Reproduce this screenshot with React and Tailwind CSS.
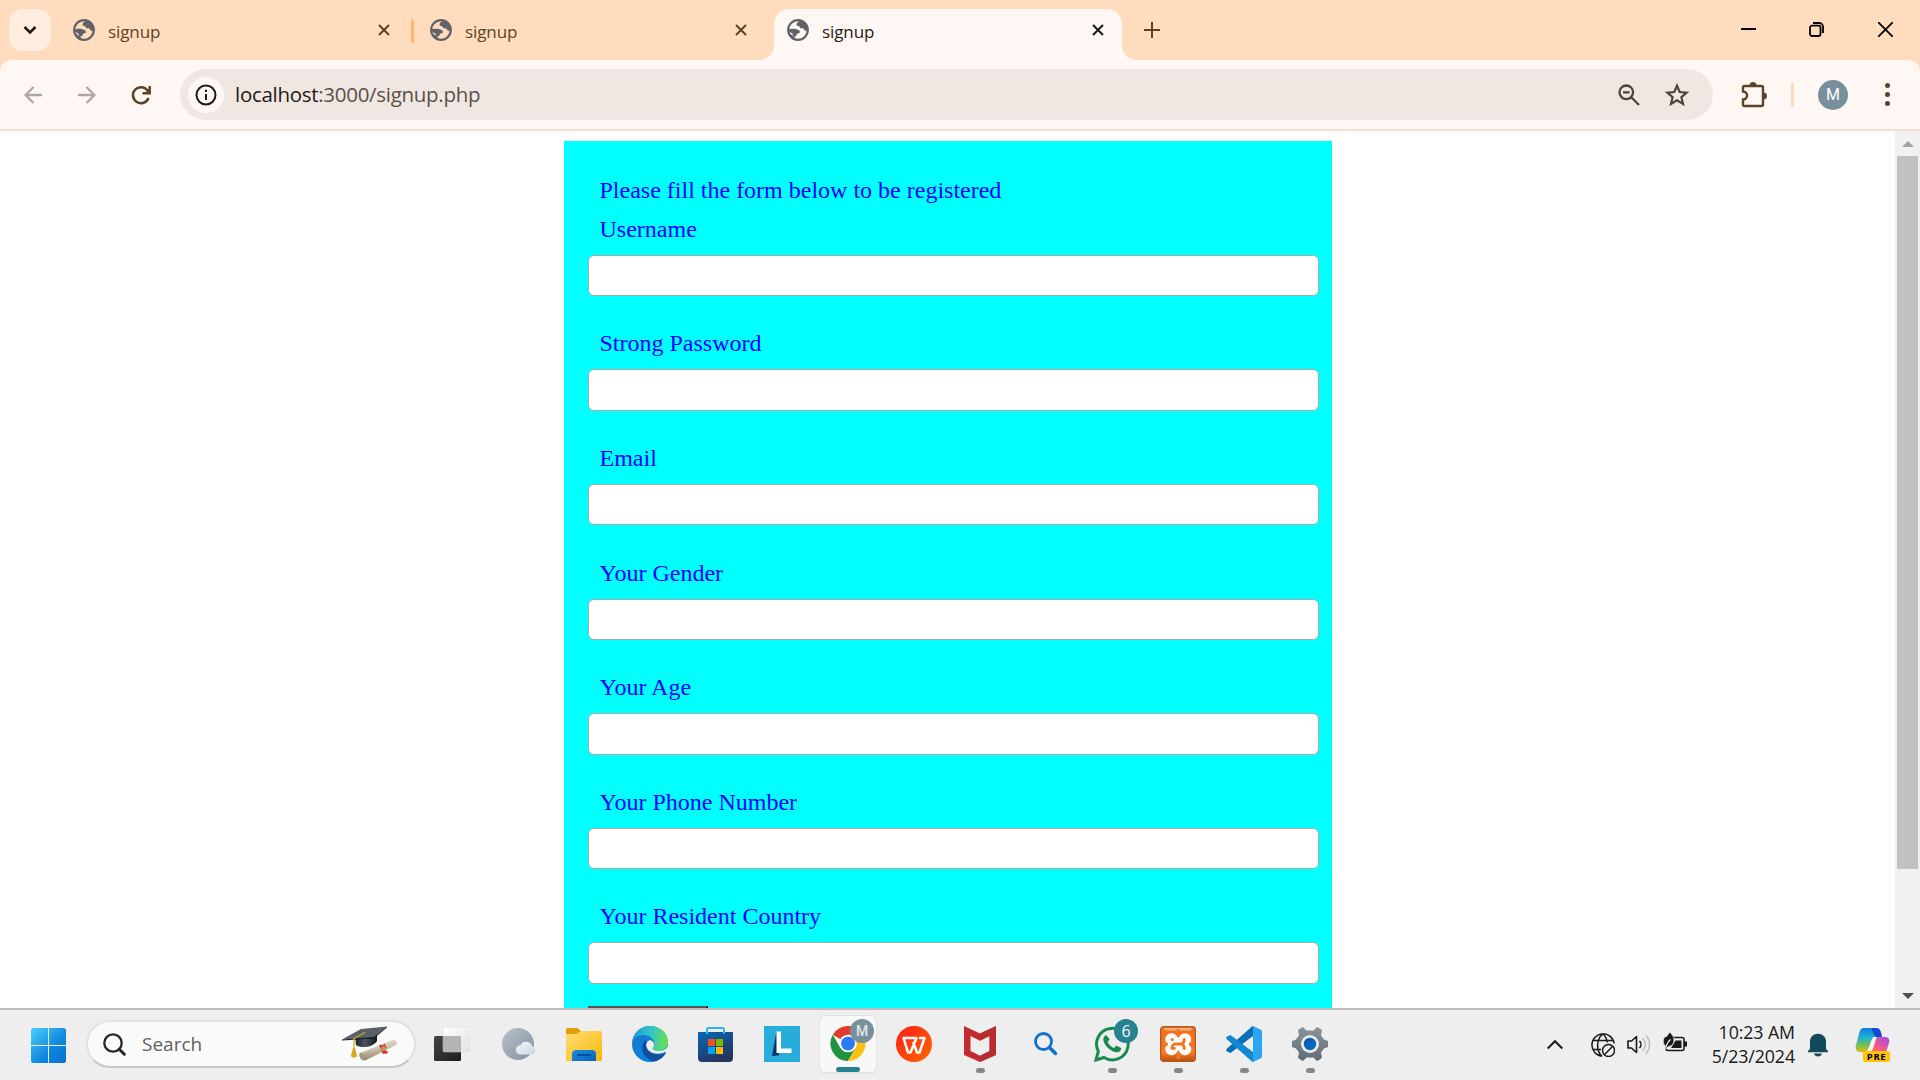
import React from "react";

const UI = "font-['Open_Sans','Noto_Sans',sans-serif]";

function Globe() {
  return (
    <svg className="h-[22px] w-[22px] shrink-0" viewBox="0 0 22 22">
      <circle cx="11" cy="11" r="9.8" fill="none" stroke="#5f6368" strokeWidth="2.200" />
      <path d="M12.500 1.300C12 3 9.500 3.500 9.500 5.500c0 1.500 1.200 1.300 2.200 1.500 1.300.3.800 1.800 2 2.300 1 .4 1.800-.6 2.700.3.800.8.6 2 2 2.200 1 .1 1.800-.2 2.800-.6C21.300 6 17.500 1.500 12.500 1.300z" fill="#5f6368" />
      <path d="M1.300 10.200C4 9.600 7 9.500 9.500 10.200c2 .6 3.800 1.300 3.300 3-.3 1.100-1.700 1.100-2.600 1.600-.9.600-.4 1.700-1 2.300-.8.700-2.200.2-3-.6-.6-.7-.2-1.600-1.200-2.200C3.500 13.500 2 13 1.300 10.200z" fill="#5f6368" />
      <path d="M3 15l4 2 1.800 3.500C6 20 4 18 3 15z" fill="#5f6368" />
    </svg>
  );
}

function Cross({ className }) {
  return (
    <svg className={"h-3 w-3 shrink-0 " + className} viewBox="0 0 12 12" fill="none" stroke="currentColor" strokeWidth="2">
      <path d="M1 1l10 10M11 1L1 11" />
    </svg>
  );
}

function Tab({ active }) {
  return (
    <div className={active ? "relative mt-[9px] flex h-[51px] w-[348px] rounded-t-[15px] bg-[#fff7f4] text-[#1f1a17]" : "mt-[9px] flex h-[51px] w-[348px] text-[#5c4326]"}>
      {active && (
        <>
          <svg className="absolute bottom-0 -left-[15px] h-[15px] w-[15px]" viewBox="0 0 15 15"><path d="M15 0v15H0A15 15 0 0 0 15 0z" fill="#fff7f4" /></svg>
          <svg className="absolute bottom-0 -right-[15px] h-[15px] w-[15px]" viewBox="0 0 15 15"><path d="M0 0v15h15A15 15 0 0 1 0 0z" fill="#fff7f4" /></svg>
        </>
      )}
      <div className="flex h-[42px] w-full items-center pl-[13px] pr-[18px]">
        <Globe />
        <span className="ml-[13px] pt-[3px] text-[17px] leading-[20px] tracking-[-0.1px]">signup</span>
        <Cross className="ml-auto" />
      </div>
    </div>
  );
}

function TabStrip() {
  return (
    <div className="flex h-[60px] items-start bg-[#ffdcbd]">
      <div className="mt-[9px] ml-[9px] flex h-[42px] w-[42px] items-center justify-center rounded-[14px] bg-[#ffeddf]">
        <svg className="h-[12px] w-[14px]" viewBox="0 0 14 12" fill="none" stroke="#1f1a17" strokeWidth="2.600"><path d="M1.500 3L7 8.500 12.500 3" /></svg>
      </div>
      <div className="ml-[9px] flex">
        <Tab />
        <div className="relative z-10 mt-[19px] ml-[3px] h-6 w-[3px] rounded bg-[#ffb868]" />
        <div className="ml-[3px]"><Tab /></div>
        <div className="ml-[9px]"><Tab active /></div>
      </div>
      <svg className="mt-[22px] ml-[22px] h-4 w-4" viewBox="0 0 16 16" stroke="#5c4326" strokeWidth="2"><path d="M8 0v16M0 8h16" /></svg>
      <div className="mt-[22px] mr-[27px] ml-auto flex items-center text-black">
        <svg className="h-[15px] w-[15px]" viewBox="0 0 15 15"><path d="M0 7h15" stroke="currentColor" strokeWidth="2" /></svg>
        <svg className="ml-[53px] h-[15px] w-[15px]" viewBox="0 0 15 15" fill="none" stroke="currentColor" strokeWidth="1.800"><rect x="1" y="3.700" width="10.500" height="10.300" rx="2" /><path d="M4 1h6a4 4 0 0 1 4 4v6" /></svg>
        <svg className="ml-[54px] h-[15px] w-[15px]" viewBox="0 0 15 15" stroke="currentColor" strokeWidth="1.800"><path d="M0 0l15 15M15 0L0 15" /></svg>
      </div>
    </div>
  );
}

function Toolbar() {
  return (
    <div className="bg-[#ffdcbd]">
      <div className="flex h-[71px] items-center rounded-t-[12px] border-b-2 border-[#f0dfd2] bg-[#fff7f4] pr-[30px] pl-[24px]">
        <svg className="h-[18px] w-[18px]" viewBox="0 0 18 18" fill="none" stroke="#aea8a4" strokeWidth="2.300"><path d="M18 9H2M9.500 1L1.600 9l7.900 8" /></svg>
        <svg className="ml-9 h-[18px] w-[18px]" viewBox="0 0 18 18" fill="none" stroke="#aea8a4" strokeWidth="2.300"><path d="M0 9h16M8.500 1l7.900 8-7.900 8" /></svg>
        <svg className="ml-[35px] h-5 w-5" viewBox="0 0 20 20" fill="none" stroke="#5c4326" strokeWidth="2.500"><path d="M17.500 13A8 8 0 1 1 16.500 5.500L18 7.200M18.700 1v7.200h-7.200" /></svg>
        <div className="ml-[29px] flex h-[51px] w-[1533px] items-center rounded-full bg-[#f0e7e2] pr-6 pl-2">
          <div className="flex h-9 w-9 items-center justify-center rounded-full bg-[#fff7f4]">
            <svg className="h-[22px] w-[22px]" viewBox="0 0 22 22" fill="none" stroke="#1f1a17" strokeWidth="2"><circle cx="11" cy="11" r="9.500" /><path d="M11 10v6M11 5.700v2.200" /></svg>
          </div>
          <span className="ml-[11px] pb-[2px] text-[20.500px] leading-[28px] tracking-[-0.290px] text-[#5b4f4a]"><span className="text-[#1f1a17]">localhost</span>:3000/signup.php</span>
          <svg className="ml-auto h-[22px] w-[22px]" viewBox="0 0 22 22" fill="none" stroke="#50443b" strokeWidth="2.300"><circle cx="8.300" cy="8.300" r="6.800" /><path d="M13 13l8 8M5 8.300h6.600" /></svg>
          <svg className="ml-[25px] h-6 w-6" viewBox="0 0 24 24" fill="none" stroke="#50443b" strokeWidth="2.200"><path d="M12 2.700l2.700 6.300 6.900.6-5.200 4.500 1.600 6.800-6-3.600-6 3.600 1.600-6.800L2.400 9.600 9.300 9z" /></svg>
        </div>
        <svg className="ml-[28px] h-[26px] w-[26px]" viewBox="0 0 26 26" fill="none" stroke="#5c4326" strokeWidth="2.400"><path d="M3.500 4h17a1.500 1.500 0 0 1 1.500 1.500v17a1.500 1.500 0 0 1-1.500 1.500h-17A1.500 1.500 0 0 1 2 22.500v-5a4 4 0 0 0 0-8v-4A1.500 1.500 0 0 1 3.500 4z" /><path d="M8.500 3.500a3.500 3.500 0 0 1 7 0zM22.500 10.500a3.500 3.500 0 0 1 0 7z" fill="#5c4326" stroke="none" /></svg>
        <div className="ml-[24px] h-6 w-[3px] bg-[#ffdcb9]" />
        <div className="ml-6 flex h-[30px] w-[30px] items-center justify-center rounded-full bg-[#78909c] font-[Roboto,sans-serif] text-[16px] text-white">M</div>
        <div className="ml-auto flex w-[5px] flex-col gap-1">
          <i className="h-[5px] w-[5px] rounded-full bg-[#5c4326]" />
          <i className="h-[5px] w-[5px] rounded-full bg-[#5c4326]" />
          <i className="h-[5px] w-[5px] rounded-full bg-[#5c4326]" />
        </div>
      </div>
    </div>
  );
}

const FIELDS = ["Username", "Strong Password", "Email", "Your Gender", "Your Age", "Your Phone Number", "Your Resident Country"];

function Page() {
  return (
    <div className="flex h-[877px] overflow-hidden bg-white">
      <div className="flex flex-1 justify-center overflow-hidden pt-[10px]">
        <form className="h-[1100px] w-[768px] shrink-0 bg-[#00ffff] pt-[30px] pl-6 font-['Liberation_Serif',serif] text-[24px] leading-[39px] text-[#0000ff]">
          <p className="h-[38.800px] pl-3">Please fill the form below to be registered</p>
          {FIELDS.map((f) => (
            <div key={f} className="h-[114.600px]">
              <label className="block h-[45px] pl-3">{f}</label>
              <input className="block h-[41.400px] w-[731px] rounded-[6px] border border-[#aaa] bg-white" />
            </div>
          ))}
          <button type="button" className="-mt-[6px] block h-12 w-[120px] border-[3px] border-[#555] border-r-black bg-[#333]" />
        </form>
      </div>
      <div className="flex w-[25px] flex-col items-center bg-[#f1f1f1]">
        <svg className="mt-[10px] h-[6px] w-[12px]" viewBox="0 0 12 6"><path d="M6 0l6 6H0z" fill="#a3a3a3" /></svg>
        <div className="mt-[9px] h-[713px] w-[21px] bg-[#c1c1c1]" />
        <svg className="mt-auto mb-[9px] h-[6px] w-[12px]" viewBox="0 0 12 6"><path d="M0 0h12L6 6z" fill="#505050" /></svg>
      </div>
    </div>
  );
}

function WindowsLogo() {
  return (
    <svg className="h-[35px] w-[35px]" viewBox="0 0 35 35">
      <defs><linearGradient id="win" x1="0" y1="0" x2="35" y2="35" gradientUnits="userSpaceOnUse"><stop stopColor="#4cd0ff" /><stop offset=".6" stopColor="#0f86dc" /><stop offset="1" stopColor="#0472d0" /></linearGradient></defs>
      <path fill="url(#win)" d="M1.500 0H17v17H0V1.500zM18 0h15.500L35 1.500V17H18zM0 18h17v17H1.500L0 33.500zM18 18h17v15.500L33.500 35H18z" />
    </svg>
  );
}

function Graduation() {
  return (
    <svg className="h-[36px] w-[58px]" viewBox="0 0 58 36">
      <defs>
        <linearGradient id="cap" x1="0" y1="0" x2="1" y2="0"><stop stopColor="#20242a" /><stop offset=".45" stopColor="#4d545c" /><stop offset="1" stopColor="#15181c" /></linearGradient>
        <linearGradient id="roll" x1="0" y1="0" x2=".3" y2="1"><stop stopColor="#f3ecdc" /><stop offset=".5" stopColor="#cfc4ac" /><stop offset="1" stopColor="#8c8068" /></linearGradient>
      </defs>
      <path d="M14 10l22-3v8c-3 6-16 8-21 4z" fill="url(#cap)" />
      <path d="M1 13.500L20 3 46 .500 33 11z" fill="#5b6168" />
      <path d="M1 13.500l32-2.500L46 .500v1L33 12.500 1 14.500z" fill="#1d2024" />
      <path d="M24 6.500L13 12.500v12" stroke="#dda520" strokeWidth="1.200" fill="none" />
      <path d="M12 22l2 0 2 8c-1 2-5 2-6 0z" fill="#e0a41c" />
      <path d="M19 27L52 14c3-1 5 3 3 5L25 34c-3 2-8-4-6-7z" fill="url(#roll)" />
      <ellipse cx="21" cy="30.500" rx="2.200" ry="4" transform="rotate(-25 21 30.500)" fill="#a5987c" />
      <path d="M38 19l4 0 4 8-4 1zM40 26l7-1-1 3zM43 17l3 5-4-1z" fill="#e02a35" />
      <circle cx="42.500" cy="22.500" r="2.500" fill="#b59a55" />
    </svg>
  );
}

function TaskView() {
  return (
    <svg className="h-9 w-9" viewBox="0 0 36 36">
      <defs><linearGradient id="tvd" x2="1" y2="1"><stop stopColor="#454545" /><stop offset="1" stopColor="#1c1c1c" /></linearGradient><linearGradient id="tvl" x2="1" y2="1"><stop stopColor="#ffffff" /><stop offset="1" stopColor="#e2e2e2" /></linearGradient></defs>
      <rect x="0" y="10" width="27" height="25" rx="1.500" fill="url(#tvd)" />
      <rect x="9" y="1" width="27" height="25" rx="1.500" fill="url(#tvl)" stroke="#d8d8d8" strokeWidth=".5" />
      <path d="M9 10h18v16H10.500A1.500 1.500 0 0 1 9 24.500z" fill="#b4b4b4" />
    </svg>
  );
}

function Weather() {
  return (
    <svg className="h-9 w-9" viewBox="0 0 36 36">
      <defs><linearGradient id="wea" x1="0" y1="0" x2="1" y2="1"><stop stopColor="#b9c3cf" /><stop offset="1" stopColor="#85909d" /></linearGradient><linearGradient id="clo" x1="0" y1="0" x2="1" y2="1"><stop stopColor="#f6f8fb" /><stop offset="1" stopColor="#ccd5e0" /></linearGradient></defs>
      <circle cx="18" cy="18" r="16" fill="url(#wea)" />
      <path d="M20.500 28.500a4.600 4.600 0 0 1 0-9.300 6.300 6.300 0 0 1 11.600.8 4.400 4.400 0 0 1-.5 8.500z" fill="url(#clo)" />
    </svg>
  );
}

function Folder() {
  return (
    <svg className="h-9 w-9" viewBox="0 0 36 36">
      <defs><linearGradient id="fol" x1="0" y1="0" x2="1" y2="1"><stop stopColor="#ffdf72" /><stop offset="1" stopColor="#fab60d" /></linearGradient><linearGradient id="fob" x1="0" y1="0" x2="1" y2="1"><stop stopColor="#1a8ce0" /><stop offset="1" stopColor="#0a64b8" /></linearGradient></defs>
      <path d="M0 3.500A1.500 1.500 0 0 1 1.500 2h10l4 3.500-5 4H0z" fill="#e09f07" />
      <path d="M0 8h10l5-3h19.500A1.500 1.500 0 0 1 36 6.500v27a1.500 1.500 0 0 1-1.500 1.500h-33A1.500 1.500 0 0 1 0 33.500z" fill="url(#fol)" />
      <path d="M6 35v-7a4 4 0 0 1 4-4h16a4 4 0 0 1 4 4v7z" fill="url(#fob)" />
      <path d="M11 29h14" stroke="#08508f" strokeWidth="1.800" />
    </svg>
  );
}

function Edge() {
  return (
    <svg className="h-9 w-9" viewBox="0 0 36 36">
      <defs>
        <linearGradient id="ed1" x1="0" y1=".3" x2="1" y2=".4"><stop stopColor="#189bd8" /><stop offset=".5" stopColor="#33c3d0" /><stop offset="1" stopColor="#6be14d" /></linearGradient>
        <linearGradient id="ed2" x1="0" y1="0" x2=".4" y2="1"><stop stopColor="#1b75c5" /><stop offset="1" stopColor="#0a82e0" /></linearGradient>
        <linearGradient id="ed3" x1="0" y1="0" x2="1" y2="1"><stop stopColor="#0d4aa0" /><stop offset="1" stopColor="#14539e" /></linearGradient>
      </defs>
      <circle cx="18" cy="18" r="18" fill="url(#ed2)" />
      <path d="M0 17C1 7 8.500 0 18 0c10 0 18 7 18 15.500 0 6-4.500 9.500-9.500 9.500-4 0-6.500-1.500-5.800-3 1.300-1.500 1.600-2.600 1.600-4C22.300 12.500 17.500 9 11.500 9 5 9 1 13 0 17z" fill="url(#ed1)" />
      <path d="M14 14c-7 5-4 19 8 21.500 5-1 9.500-4 12-8.500-10 4-20-1-20-13z" fill="url(#ed3)" />
      <path d="M18 14c-3 1.500-4.500 4-3.500 7 2 6.500 11 8.500 18.500 5 1-.5 1.500 0 1 1l2 0V20c-2 4-6 5-9.500 5-4 0-6.500-1.500-5.800-3 2.500-3 1.500-6.500-2.700-8z" fill="#eee" />
    </svg>
  );
}

function Store() {
  return (
    <svg className="h-9 w-9" viewBox="0 0 36 36">
      <defs><linearGradient id="sto" x1="0" y1="0" x2=".5" y2="1"><stop stopColor="#0768b8" /><stop offset="1" stopColor="#24365f" /></linearGradient></defs>
      <path d="M0 6h35v26a4 4 0 0 1-4 4H4a4 4 0 0 1-4-4z" fill="url(#sto)" />
      <path d="M9 8V3.500A1.500 1.500 0 0 1 10.500 2h14A1.500 1.500 0 0 1 26 3.500V8" fill="none" stroke="#2bb5ee" strokeWidth="2" />
      <path d="M10 13h7v7h-7z" fill="#f25022" /><path d="M18 13h7v7h-7z" fill="#7fba00" /><path d="M10 21h7v7h-7z" fill="#00a4ef" /><path d="M18 21h7v7h-7z" fill="#ffb900" />
    </svg>
  );
}

function LApp() {
  return (
    <svg className="h-9 w-9" viewBox="0 0 36 36">
      <path d="M0 0h36v36H0z" fill="#27addb" />
      <path d="M12.500 5.500L8 30l7-.8z" fill="#06326c" />
      <path d="M12.500 5.500H17V22.500H27.500V27H12.500z" fill="#fff" />
    </svg>
  );
}

function Chrome() {
  return (
    <svg className="h-9 w-9" viewBox="0 0 36 36">
      <path d="M18 18L2.400 9A18 18 0 0 1 33.600 9z" fill="#e33b2e" />
      <path d="M2.400 9A18 18 0 0 0 18 36l7.800-13.500L18 18l-7.800 4.500z" fill="#23933f" />
      <path d="M18 36A18 18 0 0 0 33.600 9H18l7.800 13.500z" fill="#fbc116" />
      <circle cx="18" cy="18" r="9" fill="#fff" /><circle cx="18" cy="18" r="7.100" fill="#2c7bf2" />
    </svg>
  );
}

function Wps() {
  return (
    <svg className="h-9 w-9" viewBox="0 0 36 36" fill="none">
      <defs><linearGradient id="wps" x1="0" y1="0" x2="1" y2="1"><stop stopColor="#ff1a1a" /><stop offset="1" stopColor="#ff6a00" /></linearGradient></defs>
      <circle cx="18" cy="18" r="18" fill="url(#wps)" />
      <path d="M18.500 12H7.500l4.500 14.500h2.500L20.500 12M17.500 17l3.500 9.500h2.500L28.500 12H24" stroke="#fff" strokeWidth="2.500" strokeLinejoin="round" strokeLinecap="round" />
    </svg>
  );
}

function Mcafee() {
  return (
    <svg className="h-9 w-9" viewBox="0 0 36 36">
      <path d="M2 0l16 7.500L34 0v29l-16 7-16-7zM8.500 10v15l9.500 4.700 9.500-4.700V10L18 14.700z" fillRule="evenodd" fill="#c12c2e" />
      <path d="M18 7.500L34 0v29l-16 7v-6.300l9.500-4.700V10L18 14.700z" fill="#b32b2e" opacity=".6" />
    </svg>
  );
}

function BlueSearch() {
  return (
    <svg className="h-9 w-9" viewBox="0 0 36 36" fill="none" stroke="#1370c8">
      <circle cx="15.500" cy="15.500" r="8" strokeWidth="2.800" /><path d="M21.500 21.500l6 6" strokeWidth="3.500" strokeLinecap="round" />
    </svg>
  );
}

function Whatsapp() {
  return (
    <svg className="h-9 w-9" viewBox="0 0 36 36">
      <path d="M2 34l2.300-8.700A15.800 15.800 0 1 1 10 31.500z" fill="none" stroke="#178b4f" strokeWidth="3" />
      <path d="M12.300 9.300c-1-.3-3 1.500-3 4 0 5.500 7.500 13 13.700 13 2.600 0 4.500-2 4-4.300l-4.300-2.200c-1.200-.2-1.700 2.300-2.900 2.100-2.400-.8-5.300-3.600-6-6 0-1.200 2-1.700 1.700-3z" fill="#178b4f" />
    </svg>
  );
}

function Xampp() {
  return (
    <svg className="h-9 w-9" viewBox="0 0 36 36">
      <defs><linearGradient id="xam" x1="0" y1="0" x2="0" y2="1"><stop stopColor="#d98242" /><stop offset=".15" stopColor="#f2701c" /><stop offset=".75" stopColor="#fb7a24" /><stop offset="1" stopColor="#b44f10" /></linearGradient></defs>
      <rect x=".7" y=".7" width="34.600" height="34.600" rx="3" fill="url(#xam)" stroke="#b9591c" strokeWidth="1.400" />
      <path d="M4 2h28l-1.500 2.500h-25z" fill="#ffb98c" opacity=".8" />
      <g fill="none" strokeLinecap="round" strokeLinejoin="round">
        <path d="M11.500 13.500L14.500 18h8l2.500-4.500M11.500 23l3-5M22.500 18l2.500 5" stroke="#fff" strokeWidth="12.500" />
        <path d="M18.300 5v3.500M18.300 31.500v-3M3.500 18.200h2.500M30.800 18.200h2.500" stroke="#f4751f" strokeWidth="4" />
        <path d="M12 13.700h.5M15 18h7M24.300 13.500c-.2 2.200-.9 3.800-2.300 4.500 1.400.7 2.100 2.300 2.300 4.500M15 18c-2 .5-3.200 2-3.200 4.300h2.700" stroke="#f4751f" strokeWidth="2.800" />
      </g>
    </svg>
  );
}

function VsCode() {
  return (
    <svg className="h-9 w-9" viewBox="0 0 36 36">
      <path d="M27 0v10L4.500 27 1 25.500C0 25 0 23.500 1 22.500L26 .500z" fill="#0a6fb5" />
      <path d="M27 36V26L4.500 9 1 10.500C0 11 0 12.500 1 13.500L26 35.500z" fill="#1188d2" />
      <path d="M27 0l7.500 3.500A2.500 2.500 0 0 1 36 5.500v25a2.500 2.500 0 0 1-1.500 2L27 36z" fill="#2aa7f2" />
    </svg>
  );
}

function Settings() {
  return (
    <svg className="h-9 w-9" viewBox="0 0 36 36">
      <defs><linearGradient id="gea" x1="0" y1="0" x2="0" y2="1"><stop stopColor="#8b949b" /><stop offset="1" stopColor="#626b73" /></linearGradient><linearGradient id="geb" x1="0" y1="0" x2="1" y2="1"><stop stopColor="#0b53a8" /><stop offset="1" stopColor="#0672c9" /></linearGradient></defs>
      <path d="M8 2.500l3-1.500 3.500 3.500h7L25 1l3 1.500 2 1.500-1 5.500 3 4 4 1.500v6L32 22.500l-3 4 1 5-2 2-3 1.500-3.500-3.500h-7L11 35l-3-1.500-2-2 1-5-3-4L0 21v-6l4-1.500 3-4L6 4z" fill="url(#gea)" strokeLinejoin="round" />
      <circle cx="18" cy="18" r="9" fill="#e9ebed" /><circle cx="18" cy="18" r="6.200" fill="url(#geb)" />
    </svg>
  );
}

const APPS = [
  { icon: TaskView }, { icon: Weather }, { icon: Folder }, { icon: Edge }, { icon: Store }, { icon: LApp },
  { icon: Chrome, active: true, badge: "M" }, { icon: Wps }, { icon: Mcafee, open: true }, { icon: BlueSearch },
  { icon: Whatsapp, open: true, badge: "6" }, { icon: Xampp, open: true }, { icon: VsCode, open: true }, { icon: Settings, open: true },
];

function AppButton({ icon: Icon, active, open, badge }) {
  return (
    <div className="flex h-full w-[66px] justify-center pt-[5px]">
      <div className={active ? "relative flex h-[59px] w-[58px] flex-col items-center rounded-[6px] border border-b-2 border-[#e2e2e2] bg-[#f8f8f8] pt-[10px]" : "relative flex h-[59px] w-[58px] flex-col items-center pt-[11px]"}>
        <Icon />
        {active && <div className="mt-[6px] h-[5px] w-6 shrink-0 rounded-full bg-[#26828f]" />}
        {open && <div className="mt-[6px] h-[5px] w-[9px] shrink-0 rounded-full bg-[#868686]" />}
        {badge === "M" && <div className="absolute top-[3px] right-[2px] flex h-6 w-6 items-center justify-center rounded-full bg-[#78909c] font-[Roboto,sans-serif] text-[14px] font-medium text-[#dfe6ea]">M</div>}
        {badge === "6" && <div className="absolute top-[4px] right-[3px] flex h-6 w-6 items-center justify-center rounded-full bg-[#26828f] text-[16px] text-white">6</div>}
      </div>
    </div>
  );
}

function Tray() {
  return (
    <div className="ml-auto flex h-full items-center pr-[30px] text-[#1a1a1a]">
      <svg className="h-4 w-4" viewBox="0 0 16 16" fill="none" stroke="currentColor" strokeWidth="2"><path d="M.7 11.500L8 4.200l7.300 7.300" /></svg>
      <svg className="ml-7 h-6 w-6" viewBox="0 0 24 24" fill="none" stroke="currentColor" strokeWidth="1.500">
        <path d="M11 23.200A11.200 11.200 0 1 1 23.200 10.500M11 23.200C5 18 5 6 12 .8c2.500 2.500 4 5.500 4.200 8.700M2 7.500h20M1.500 16.500H10" />
        <circle cx="17.500" cy="17.500" r="6" /><path d="M13.300 21.700l8.400-8.400" />
      </svg>
      <svg className="ml-3 h-6 w-6" viewBox="0 0 24 24" fill="none" strokeWidth="1.600">
        <path d="M1 8h3.500L9.500 3.500v16l-5-4.500H1z" stroke="currentColor" strokeLinejoin="round" /><path d="M12.500 8a5 5 0 0 1 0 7" stroke="currentColor" />
        <path d="M15.500 5a9 9 0 0 1 0 13M18.700 2.300a13 13 0 0 1 0 18.400" stroke="#c0c0c0" />
      </svg>
      <svg className="ml-3 h-6 w-6 overflow-visible" viewBox="0 0 24 24" fill="none" stroke="currentColor" strokeWidth="1.600">
        <path d="M10 4.500h9a2 2 0 0 1 2 2v9a2 2 0 0 1-2 2H5a2 2 0 0 1-2-2" /><path d="M22.500 8.500v5" strokeWidth="3" /><path d="M12.500 7.500H18.500v7.500H8z" fill="currentColor" stroke="none" />
        <path d="M7 -1c2 3 4 4 4 8 0 4-2 6-5 6.500L2.500 15.500 2 12.500C-.5 10-.5 6 2.500 3.500 3 5 3.500 3 7 -1z" fill="currentColor" stroke="#eee" strokeWidth=".8" />
        <path d="M7.500 6.500C5.500 8 4 10.500 3 14" stroke="#eee" strokeWidth="1.100" />
      </svg>
      <div className="ml-[20px] w-[88px] pb-[3px] text-right text-[17.800px] leading-[24px] tracking-[-0.100px]"><div>10:23 AM</div><div>5/23/2024</div></div>
      <svg className="ml-[13px] h-6 w-5" viewBox="0 0 20 24" fill="#124a59"><path d="M2 16V8.500C2 4 5.500.8 10 .8s8 3.200 8 7.700V16l2 2v1.300H0V18zM6 20.500h8c-.5 2-2 3-4 3s-3.500-1-4-3z" /></svg>
      <div className="relative ml-[27px] h-[36px] w-[35px]">
        <svg className="h-[30px] w-[35px]" viewBox="0 0 35 30">
          <defs>
            <linearGradient id="cp1" x1="0" y1="0" x2="0" y2="1"><stop stopColor="#0f7ee0" /><stop offset=".4" stopColor="#1fb0d8" /><stop offset=".75" stopColor="#7cc242" /><stop offset="1" stopColor="#e8b61c" /></linearGradient>
            <linearGradient id="cp2" x1="1" y1="0" x2="0" y2="1"><stop stopColor="#9a4df0" /><stop offset=".5" stopColor="#e8559e" /><stop offset="1" stopColor="#ff7a4a" /></linearGradient>
          </defs>
          <path d="M9 1h12c4 0 5 3 6 8l-8 1-4 11c-1 3-3 4-6 4H5c-4 0-5-3-4-7l3-11c1-4 2-6 5-6z" fill="url(#cp1)" />
          <path d="M16 1h5c4 0 5 4 6 9h-6c-2-1-3-6-5-9z" fill="#1449d0" />
          <path d="M21 10h9c4 0 5 3 4 6l-3 9H15c2 0 3-4 4-8s1-7 2-7z" fill="url(#cp2)" />
          <path d="M18.500 10h3.500c-2 3-3 13-7 15h-4c4-3 4-12 7.500-15z" fill="#f4f4f4" />
        </svg>
        <div className="absolute right-0 bottom-px flex h-[11px] w-[27px] items-center justify-center rounded-[2px] bg-[#ffc30b] text-[9.500px] leading-none font-bold tracking-[0.6px] text-black">PRE</div>
      </div>
    </div>
  );
}

function Taskbar() {
  return (
    <div className="flex h-[72px] items-center border-t-2 border-[#bdbdbd] bg-[#eee]">
      <div className="ml-[31px]"><WindowsLogo /></div>
      <div className="mb-[2px] ml-[20px] flex h-12 w-[330px] items-center rounded-full border-2 border-[#e2e2e2] border-b-[#c6c6c6] bg-[#fafafa] pr-[15px] pl-[15px]">
        <svg className="h-[23px] w-[23px]" viewBox="0 0 23 23" fill="none" stroke="#262626"><circle cx="10" cy="10" r="8.700" strokeWidth="2.300" /><path d="M16.300 16.300l5 5" strokeWidth="3" strokeLinecap="round" /></svg>
        <span className="ml-4 text-[19px] leading-6 text-[#5f5f5f]">Search</span>
        <div className="ml-auto"><Graduation /></div>
      </div>
      <div className="ml-[3px] flex h-full">
        {APPS.map((a, i) => <AppButton key={i} {...a} />)}
      </div>
      <Tray />
    </div>
  );
}

export default function App() {
  return (
    <div className={"h-[1080px] w-[1920px] overflow-hidden " + UI}>
      <TabStrip />
      <Toolbar />
      <Page />
      <Taskbar />
    </div>
  );
}
